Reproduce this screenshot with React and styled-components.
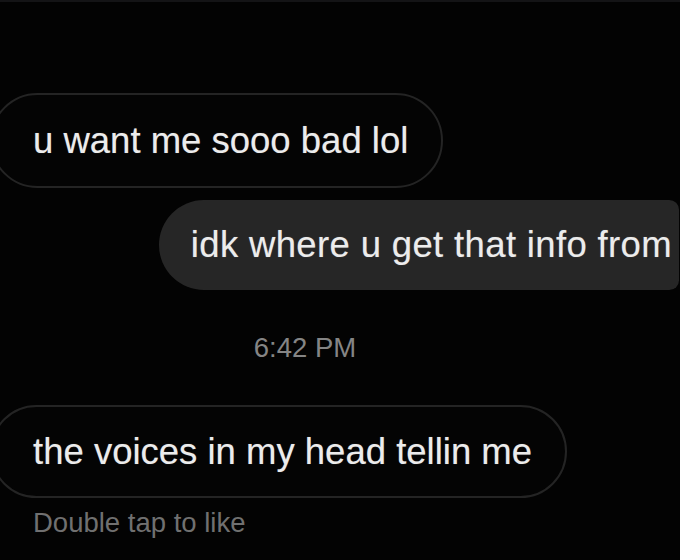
import React from 'react';
import styled, { createGlobalStyle } from 'styled-components';

const GlobalStyle = createGlobalStyle`
    html, body {
        margin: 0;
        padding: 0;
        background: #030303;
    }
`;

const Screen = styled.div`
    width: 680px;
    height: 560px;
    overflow: hidden;
    background: #030303;
    border-top: 2px solid #141416;
    box-sizing: border-box;
    display: flex;
    flex-direction: column;
    padding-top: 91px;
    font-family: "Liberation Sans", Arial, sans-serif;
    -webkit-font-smoothing: antialiased;
`;

const Row = styled.div`
    display: flex;
    justify-content: ${p => (p.$mine ? 'flex-end' : 'flex-start')};
    margin-top: ${p => p.$gap || 0}px;
`;

const Bubble = styled.div`
    box-sizing: border-box;
    height: ${p => p.$h}px;
    display: flex;
    align-items: center;
    font-size: 36.5px;
    color: #ececec;
    white-space: nowrap;
    text-shadow: 0 0 1px rgba(255, 255, 255, 0.35);
    ${p => p.$mine ? `
        background: #262626;
        padding: 0 7px 0 32px;
        margin-right: 1px;
        letter-spacing: 0.35px;
        border-radius: 46px 10px 10px 46px;
    ` : `
        background: #040404;
        border: 2px solid #242424;
        margin-left: -10px;
        padding: 0 33px 0 41px;
        border-radius: 48px;
    `}
`;

const Stamp = styled.div`
    margin-top: 43px;
    text-align: center;
    font-size: 27.5px;
    line-height: 30px;
    color: #858585;
    padding-right: 70px;
`;

const Hint = styled.div`
    margin-top: 10px;
    padding-left: 33px;
    font-size: 27.5px;
    line-height: 30px;
    color: #707070;
`;

const App = () => {
    return <Screen>
        <GlobalStyle />
        <Row>
            <Bubble $h={95}>u want me sooo bad lol</Bubble>
        </Row>
        <Row $mine $gap={12}>
            <Bubble $mine $h={90}>idk where u get that info from</Bubble>
        </Row>
        <Stamp>6:42 PM</Stamp>
        <Row $gap={42}>
            <Bubble $h={93}>the voices in my head tellin me</Bubble>
        </Row>
        <Hint>Double tap to like</Hint>
    </Screen>;
}

export default App
